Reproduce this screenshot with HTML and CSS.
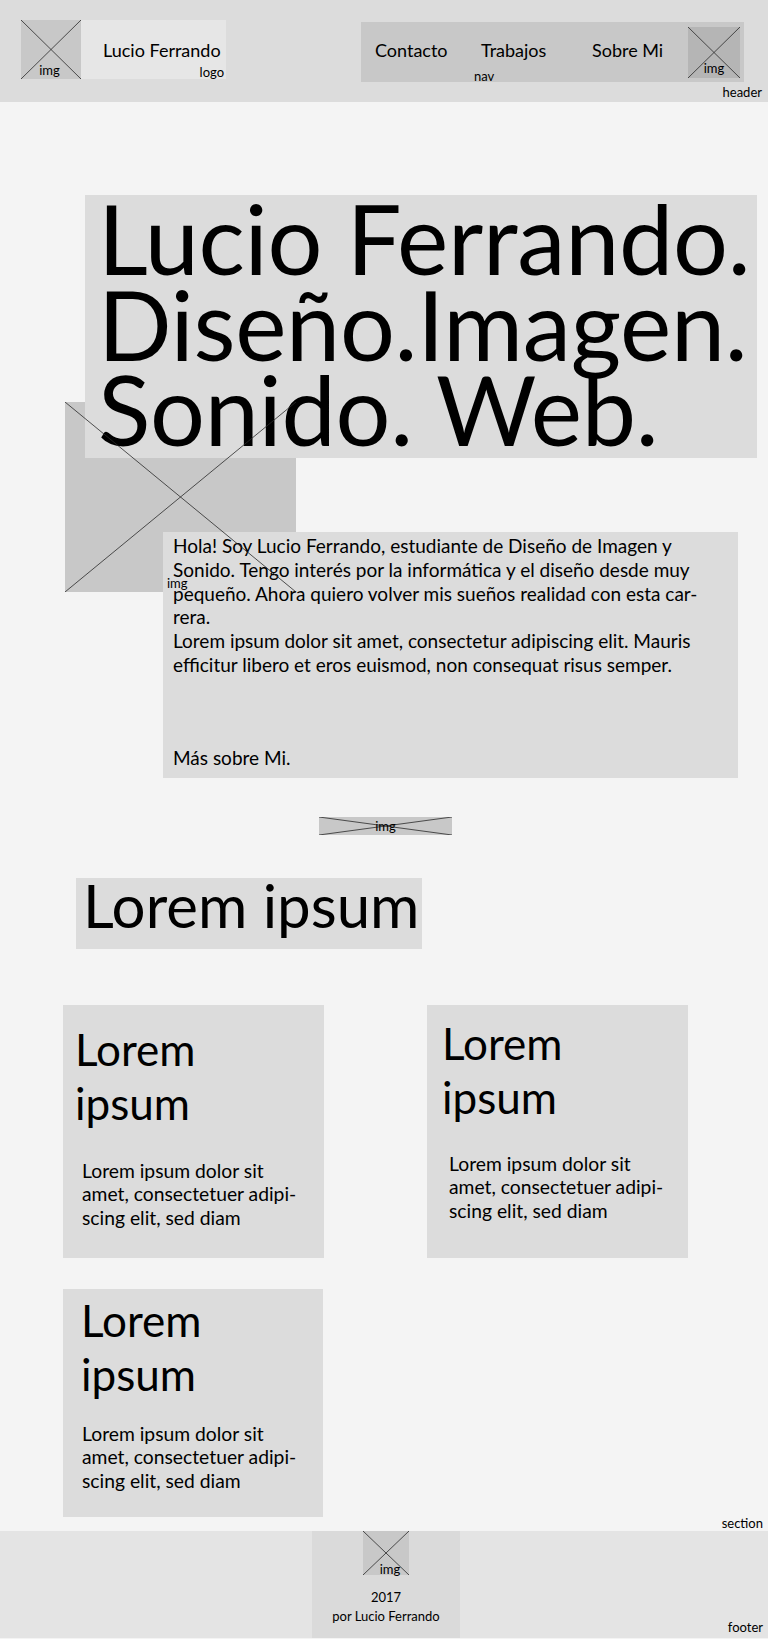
FILE: index.html
```html
<!DOCTYPE html>
<html lang="es">
    <head>
        <meta charset="UTF-8">
        <title>Lucio Ferrando</title>
        <link rel="stylesheet" href="styles.css">
    </head>
    <body>
        <!-- cabecera -->
        <header class="site-header">
            <div class="header-row">
                <div class="brand">
                    <div class="ph brand-img">
                        <svg class="x-lines" viewBox="0 0 100 100" preserveAspectRatio="none"><line x1="0" y1="0" x2="100" y2="100"/><line x1="0" y1="100" x2="100" y2="0"/></svg>
                        <span class="ph-label">img</span>
                    </div>
                    <div class="brand-name">
                        <span class="brand-title">Lucio Ferrando</span>
                        <span class="tag tag-logo">logo</span>
                    </div>
                </div>
                <nav class="main-nav">
                    <a class="nav-link nav-contacto" href="#">Contacto</a>
                    <a class="nav-link nav-trabajos" href="#">Trabajos</a>
                    <a class="nav-link nav-sobre" href="#">Sobre Mi</a>
                    <div class="ph nav-img">
                        <svg class="x-lines" viewBox="0 0 100 100" preserveAspectRatio="none"><line x1="0" y1="0" x2="100" y2="100"/><line x1="0" y1="100" x2="100" y2="0"/></svg>
                        <span class="ph-label">img</span>
                    </div>
                    <span class="tag tag-nav">nav</span>
                </nav>
            </div>
            <div class="tag tag-header">header</div>
        </header>

        <main class="content">
            <div class="hero">
                <h1 class="hero-title">Lucio Ferrando.<br>Diseño.Imagen.<br>Sonido. Web.</h1>
                <div class="hero-text">
                    <p>Hola! Soy Lucio Ferrando, estudiante de Diseño de Imagen y<br>Sonido. Tengo interés por la informática y el diseño desde muy<br>pequeño. Ahora quiero volver mis sueños realidad con esta car-<br>rera.<br>Lorem ipsum dolor sit amet, consectetur adipiscing elit. Mauris<br>efficitur libero et eros euismod, non consequat risus semper.</p>
                    <p class="more">Más sobre Mi.</p>
                </div>
                <!-- la imagen queda debajo de las cajas, las lineas encima -->
                <div class="hero-img">
                    <svg class="x-lines hero-lines" viewBox="0 0 100 100" preserveAspectRatio="none"><line x1="0" y1="0" x2="100" y2="100"/><line x1="0" y1="100" x2="100" y2="0"/></svg>
                    <span class="hero-img-label">img</span>
                </div>
            </div>

            <div class="ph strip-img">
                <svg class="x-lines" viewBox="0 0 100 100" preserveAspectRatio="none"><line x1="0" y1="0" x2="100" y2="100"/><line x1="0" y1="100" x2="100" y2="0"/></svg>
                <span class="strip-label">img</span>
            </div>

            <h2 class="section-title">Lorem ipsum</h2>

            <div class="cards">
                <div class="card card-1">
                    <h3 class="card-title">Lorem<br>ipsum</h3>
                    <p class="card-text">Lorem ipsum dolor sit<br>amet, consectetuer adipi-<br>scing elit, sed diam</p>
                </div>
                <div class="card card-2">
                    <h3 class="card-title">Lorem<br>ipsum</h3>
                    <p class="card-text">Lorem ipsum dolor sit<br>amet, consectetuer adipi-<br>scing elit, sed diam</p>
                </div>
                <div class="card card-3">
                    <h3 class="card-title">Lorem<br>ipsum</h3>
                    <p class="card-text">Lorem ipsum dolor sit<br>amet, consectetuer adipi-<br>scing elit, sed diam</p>
                </div>
            </div>
            <div class="tag tag-section">section</div>
        </main>

        <!-- pie -->
        <footer class="site-footer">
            <div class="footer-box">
                <div class="ph footer-img">
                    <svg class="x-lines" viewBox="0 0 100 100" preserveAspectRatio="none"><line x1="0" y1="0" x2="100" y2="100"/><line x1="0" y1="100" x2="100" y2="0"/></svg>
                    <span class="ph-label">img</span>
                </div>
                <p class="footer-line">2017</p>
                <p class="footer-line">por Lucio Ferrando</p>
            </div>
            <span class="tag tag-footer">footer</span>
        </footer>
    </body>
</html>
```

FILE: styles.css
```css
body {
    margin: 0;
    width: 768px;
    background-color: #f4f4f4;
    font-family: Lato, "Open Sans", sans-serif;
    color: #000;
}

p, h1, h2, h3 {
    margin: 0;
    font-weight: normal;
}

/* placeholders de imagen */
.ph {
    position: relative;
    background-color: #c8c8c8;
}

.x-lines {
    position: absolute;
    left: 0;
    top: 0;
    width: 100%;
    height: 100%;
}

.x-lines line {
    stroke: #2a2a2a;
    stroke-width: 0.8;
    vector-effect: non-scaling-stroke;
}

.ph-label {
    position: absolute;
    left: 0;
    right: 0;
    bottom: 0;
    text-align: center;
    font-size: 13px;
    line-height: 15px;
}

.tag {
    font-size: 13px;
    line-height: 15px;
}

/* cabecera */
.site-header {
    position: relative;
    height: 102px;
    padding-top: 20px;
    box-sizing: border-box;
    background-color: #dcdcdc;
}

.header-row {
    display: flex;
    justify-content: space-between;
    align-items: flex-start;
    padding: 0 24px 0 21px;
}

.brand {
    display: flex;
}

.brand-img {
    width: 60px;
    height: 59px;
}

.brand-img .ph-label {
    bottom: 1px;
    padding-right: 3px;
}

.brand-name {
    display: flex;
    flex-direction: column;
    width: 145px;
    height: 59px;
    box-sizing: border-box;
    padding: 19px 2px 0 22px;
    background-color: #e6e6e6;
}

.brand-title {
    font-size: 18px;
    line-height: 22px;
}

.tag-logo {
    margin-top: 4px;
    text-align: right;
}

.main-nav {
    position: relative;
    display: flex;
    align-items: flex-start;
    width: 383px;
    height: 60px;
    margin-top: 2px;
    padding: 0 4px 0 14px;
    box-sizing: border-box;
    background-color: #c8c8c8;
}

.nav-link {
    padding-top: 17px;
    font-size: 18px;
    line-height: 22px;
    color: #000;
    text-decoration: none;
}

.nav-contacto { width: 106px; }
.nav-trabajos { width: 111px; }
.nav-sobre { width: 96px; }

.nav-img {
    width: 52px;
    height: 51px;
    margin-top: 5px;
    background-color: #b5b5b5;
}

.nav-img .ph-label {
    bottom: 2px;
}

.tag-nav {
    position: absolute;
    left: 113px;
    top: 47px;
}

.tag-header {
    margin-top: 3px;
    padding-right: 6px;
    text-align: right;
}

/* contenido */
.content {
    padding-top: 93px;
}

.hero {
    position: relative;
}

.hero-title {
    position: relative;
    z-index: 1;
    width: 672px;
    height: 263px;
    margin-left: 85px;
    padding-left: 13px;
    box-sizing: border-box;
    background-color: #dcdcdc;
    font-size: 97px;
    line-height: 85.5px;
    letter-spacing: -0.3px;
    white-space: nowrap;
}

.hero-text {
    position: relative;
    z-index: 1;
    width: 575px;
    height: 246px;
    margin: 74px 0 0 163px;
    padding: 2px 0 0 10px;
    box-sizing: border-box;
    background-color: #dcdcdc;
    font-size: 19px;
    line-height: 23.8px;
    white-space: nowrap;
}

.hero-text .more {
    margin-top: 69px;
}

.hero-img {
    position: absolute;
    left: 65px;
    top: 207px;
    width: 231px;
    height: 190px;
    background-color: #c8c8c8;
}

.hero-lines {
    z-index: 2;
}

.hero-img-label {
    position: absolute;
    z-index: 2;
    left: 102px;
    top: 174px;
    font-size: 13px;
    line-height: 15px;
}

.strip-img {
    width: 133px;
    height: 18px;
    margin: 39px 0 0 319px;
}

.strip-label {
    position: absolute;
    left: 0;
    right: 0;
    top: 2px;
    text-align: center;
    font-size: 13px;
    line-height: 15px;
}

.section-title {
    width: 346px;
    height: 71px;
    margin: 43px 0 0 76px;
    padding-left: 7px;
    box-sizing: border-box;
    background-color: #dcdcdc;
    font-size: 60px;
    line-height: 55px;
    white-space: nowrap;
}

.cards {
    display: grid;
    grid-template-columns: 261px 261px;
    column-gap: 103px;
    row-gap: 31px;
    margin: 56px 0 0 63px;
}

.card {
    height: 253px;
    box-sizing: border-box;
    background-color: #dcdcdc;
}

.card-title {
    font-size: 44px;
    line-height: 54px;
}

.card-text {
    font-size: 19.3px;
    line-height: 23.5px;
    white-space: nowrap;
}

.card-1 { padding: 17px 0 0 12px; }
.card-1 .card-text { margin: 28.5px 0 0 7px; }

.card-2 { padding: 11px 0 0 15px; }
.card-2 .card-text { margin: 27.5px 0 0 7px; }

.card-3 {
    width: 260px;
    height: 228px;
    padding: 4px 0 0 18px;
}
.card-3 .card-text { margin: 20.5px 0 0 1px; }

.tag-section {
    margin-top: -1px;
    padding-right: 5px;
    text-align: right;
}

/* pie */
.site-footer {
    position: relative;
    height: 107px;
    padding-left: 312px;
    background-color: #e4e4e4;
}

.footer-box {
    display: flex;
    flex-direction: column;
    align-items: center;
    width: 148px;
    height: 107px;
    background-color: #dadada;
}

.footer-img {
    width: 46px;
    height: 44px;
    margin-bottom: 13px;
}

.footer-img .ph-label {
    bottom: -2px;
    padding-left: 8px;
}

.footer-line {
    font-size: 13px;
    line-height: 19px;
}

.tag-footer {
    position: absolute;
    right: 5px;
    bottom: 3px;
}
```
